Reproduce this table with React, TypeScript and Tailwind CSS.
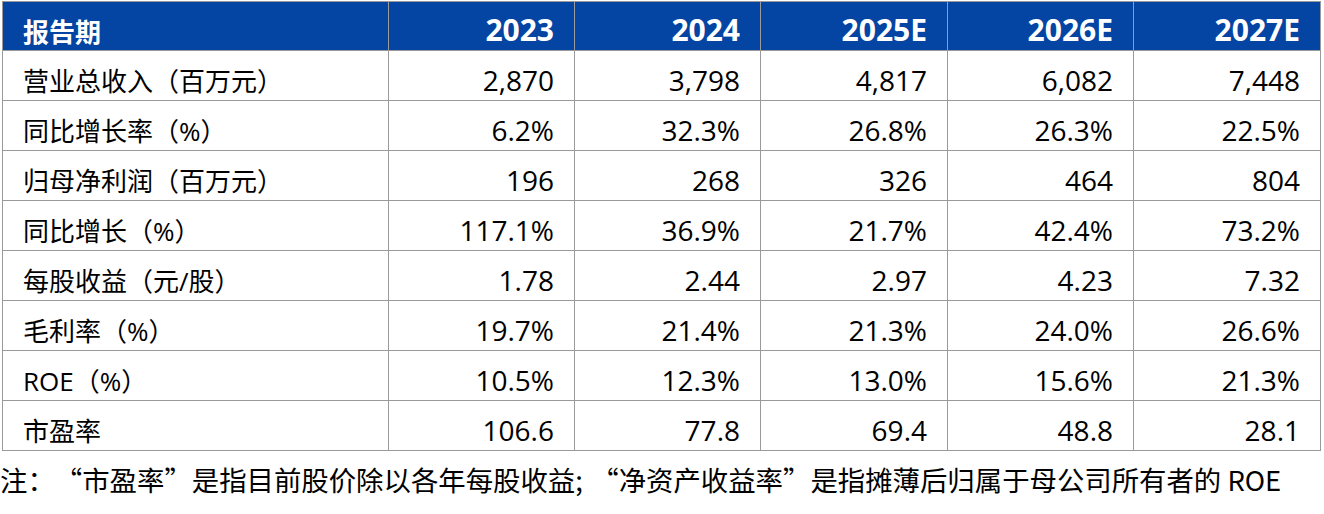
const years = ['2023', '2024', '2025E', '2026E', '2027E'];

const rows: { label: string; values: string[] }[] = [
  { label: '营业总收入（百万元）', values: ['2,870', '3,798', '4,817', '6,082', '7,448'] },
  { label: '同比增长率（%）', values: ['6.2%', '32.3%', '26.8%', '26.3%', '22.5%'] },
  { label: '归母净利润（百万元）', values: ['196', '268', '326', '464', '804'] },
  { label: '同比增长（%）', values: ['117.1%', '36.9%', '21.7%', '42.4%', '73.2%'] },
  { label: '每股收益（元/股）', values: ['1.78', '2.44', '2.97', '4.23', '7.32'] },
  { label: '毛利率（%）', values: ['19.7%', '21.4%', '21.3%', '24.0%', '26.6%'] },
  { label: 'ROE（%）', values: ['10.5%', '12.3%', '13.0%', '15.6%', '21.3%'] },
  { label: '市盈率', values: ['106.6', '77.8', '69.4', '48.8', '28.1'] },
];

const font = "font-['Open_Sans','Noto_Sans_CJK_SC',sans-serif]";

// full width quote marks, as the reference lays them out
function Lq() {
  return <span className="inline-block w-[27.4px] text-right">“</span>;
}
function Rq() {
  return <span className="inline-block w-[27.4px] text-left">”</span>;
}

export default function App() {
  return (
    <div className="w-[1324px] h-[514px] bg-white overflow-hidden">
      <table className={`ml-[2px] mt-[1px] w-[1318px] table-fixed border-collapse ${font} text-black`}>
        <colgroup>
          <col className="w-[386px]" />
          <col className="w-[186px]" />
          <col className="w-[186px]" />
          <col className="w-[187px]" />
          <col className="w-[186px]" />
          <col className="w-[187px]" />
        </colgroup>
        <thead>
          <tr className="h-[49px] bg-[#0444a3] text-white">
            <th className="border border-[#9a9a9a] pl-[20px] pt-[10px] text-left text-[26px] font-bold leading-[34px] font-['Noto_Sans_CJK_SC',sans-serif]">
              报告期
            </th>
            {years.map((y) => (
              <th key={y} className="border border-[#9a9a9a] pr-[20px] pt-[8px] text-right text-[30px] font-bold leading-[34px]">
                {y}
              </th>
            ))}
          </tr>
        </thead>
        <tbody>
          {rows.map((r) => (
            <tr key={r.label} className="h-[50px]">
              <td className="border border-[#9a9a9a] pl-[20px] pt-[10px] text-left text-[26px] leading-[34px] whitespace-nowrap">
                {r.label}
              </td>
              {r.values.map((v, i) => (
                <td key={i} className="border border-[#9a9a9a] pr-[20px] pt-[9px] text-right text-[28px] leading-[34px]">
                  {v}
                </td>
              ))}
            </tr>
          ))}
        </tbody>
      </table>
      <p className="mt-[11px] whitespace-nowrap text-[27.4px] leading-[34px] text-black font-['Noto_Sans_CJK_SC',sans-serif]">
        注：<Lq />市盈率<Rq />是指目前股价除以各年每股收益<span className="inline-block w-[16px] text-left">;</span>
        <Lq />净资产收益率<Rq />是指摊薄后归属于母公司所有者的 ROE
      </p>
    </div>
  );
}
